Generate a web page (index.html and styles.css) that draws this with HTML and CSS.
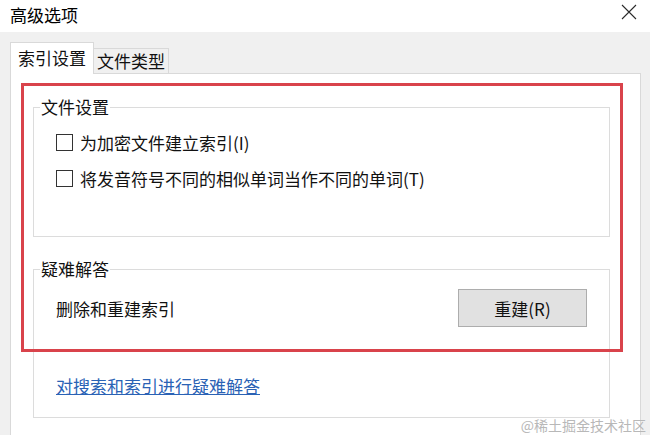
FILE: index.html
```html
<!DOCTYPE html>
<html lang="zh-CN">
<head>
<meta charset="utf-8">
<title>高级选项</title>
<link rel="stylesheet" href="styles.css">
</head>
<body>
<div class="window">
  <header class="titlebar">
    <span class="title">高级选项</span>
    <svg class="close" width="16" height="16" viewBox="0 0 16 16" aria-label="关闭">
      <path d="M1 1 L15 15 M15 1 L1 15" stroke="#2b2b2b" stroke-width="1.1" fill="none"/>
    </svg>
  </header>
  <div class="client">
    <nav class="tabs">
      <span class="tab tab-active">索引设置</span>
      <span class="tab">文件类型</span>
    </nav>
    <section class="panel">
      <fieldset class="group group-files">
        <legend class="legend">文件设置</legend>
        <label class="check-row"><span class="checkbox"></span><span>为加密文件建立索引(I)</span></label>
        <label class="check-row check-row-2"><span class="checkbox"></span><span>将发音符号不同的相似单词当作不同的单词(T)</span></label>
      </fieldset>
      <fieldset class="group group-trouble">
        <legend class="legend">疑难解答</legend>
        <div class="rebuild-row">
          <span>删除和重建索引</span>
          <button class="btn" type="button">重建(R)</button>
        </div>
        <a class="link" href="#">对搜索和索引进行疑难解答</a>
      </fieldset>
    </section>
  </div>
  <div class="highlight"></div>
  <div class="watermark">@稀土掘金技术社区</div>
</div>
</body>
</html>
```
FILE: styles.css
```css
html, body {
  margin: 0;
  padding: 0;
}
body {
  background: #f0f0f0;
  font-family: "Noto Sans CJK SC", "Microsoft YaHei", sans-serif;
  font-size: 17px;
  color: #111;
}
.window {
  position: relative;
  width: 650px;
  height: 435px;
  overflow: hidden;
  background: #f0f0f0;
}
.titlebar {
  height: 32px;
  background: #fff;
  display: flex;
  justify-content: space-between;
  align-items: flex-start;
}
.title {
  margin: 6px 0 0 10px;
  line-height: 17px;
  color: #000;
}
.close {
  margin: 4px 13px 0 0;
}
.client {
  padding-top: 10px;
}
.tabs {
  display: flex;
  align-items: flex-end;
  padding-left: 10px;
  height: 31px;
}
.tab {
  box-sizing: border-box;
  height: 25px;
  padding: 3px 3px 0 3px;
  line-height: 17px;
  border: 1px solid #d9d9d9;
  border-left: 0;
  border-bottom: 0;
  background: #f0f0f0;
}
.tab-active {
  position: relative;
  z-index: 1;
  height: 32px;
  margin-bottom: -1px;
  padding: 6px 7px 0 7px;
  border-left: 1px solid #d9d9d9;
  background: #fff;
}
.panel {
  box-sizing: border-box;
  margin-left: 10px;
  width: 631px;
  height: 400px;
  background: #fff;
  border: 1px solid #d9d9d9;
  padding-top: 25px;
}
.group {
  margin: 0 30px 0 22px;
  padding: 0 22px;
  border: 1px solid #dcdcdc;
  min-width: 0;
}
.legend {
  margin-left: -16px;
  padding: 0 1px;
  line-height: 16px;
  color: #111;
}
.group-files {
  padding-top: 19px;
  padding-bottom: 49px;
}
.check-row {
  display: flex;
  align-items: center;
  height: 17px;
  line-height: 17px;
  gap: 7px;
}
.check-row-2 {
  margin-top: 19px;
}
.checkbox {
  flex: none;
  box-sizing: border-box;
  width: 17px;
  height: 17px;
  border: 1px solid #333;
  background: #fff;
}
.group-trouble {
  margin-top: 24px;
  padding-top: 12px;
  padding-bottom: 23px;
}
.rebuild-row {
  display: flex;
  justify-content: space-between;
  align-items: center;
  line-height: 17px;
}
.btn {
  box-sizing: border-box;
  width: 129px;
  height: 38px;
  background: #e1e1e1;
  border: 1px solid #adadad;
  font-family: inherit;
  font-size: 17px;
  line-height: 17px;
  color: #111;
  padding: 0;
}
.link {
  display: block;
  width: max-content;
  margin-top: 50px;
  line-height: 17px;
  color: #2a62b5;
  text-decoration: underline;
  text-underline-offset: 1px;
}
.highlight {
  position: absolute;
  left: 21px;
  top: 83px;
  width: 602px;
  height: 269px;
  box-sizing: border-box;
  border: 3px solid #d9434b;
  pointer-events: none;
}
.watermark {
  position: absolute;
  right: 4px;
  bottom: 2px;
  font-size: 14px;
  line-height: 15px;
  color: #b8b8b8;
}
```
